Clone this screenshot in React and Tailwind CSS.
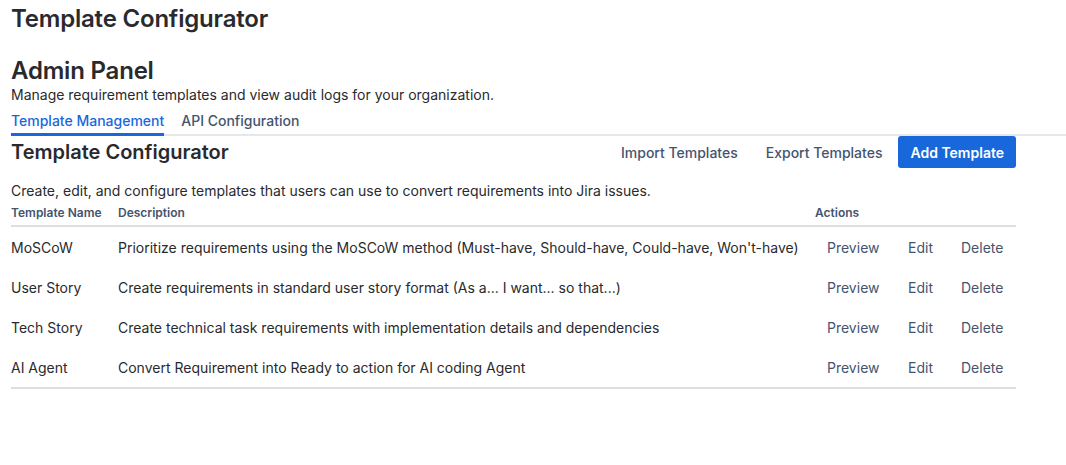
import React from "react";

const rows = [
  ["MoSCoW", "Prioritize requirements using the MoSCoW method (Must-have, Should-have, Could-have, Won't-have)"],
  ["User Story", "Create requirements in standard user story format (As a... I want... so that...)"],
  ["Tech Story", "Create technical task requirements with implementation details and dependencies"],
  ["AI Agent", "Convert Requirement into Ready to action for AI coding Agent"],
];

export default function App() {
  return (
    <div
      className="min-h-[465px] bg-white pl-[11px] text-[#292A2E]"
      style={{ fontFamily: "Inter, 'Noto Sans', sans-serif" }}
    >
      <h1 className="pt-[5px] text-[24px] font-semibold leading-[28px] tracking-[-0.2px]">Template Configurator</h1>
      <h2 className="mt-[24px] text-[24px] font-semibold leading-[28px] tracking-[-0.2px]">Admin Panel</h2>
      <p className="text-[14px] leading-[20px]">Manage requirement templates and view audit logs for your organization.</p>

      <div className="mt-[6px] flex border-b-2 border-[#E6E7EA]">
        <div className="-mb-[2px] flex gap-[17px]">
          <div className="border-b-[3px] border-[#1868DB] pb-[2px] text-[14px] font-medium leading-[20px] text-[#1868DB]">
            Template Management
          </div>
          <div className="pb-[2px] text-[14px] font-medium leading-[20px] text-[#44546F]">API Configuration</div>
        </div>
      </div>

      <div className="w-[1005px]">
        <div className="flex items-center justify-between">
          <h3 className="text-[20px] font-semibold leading-[24px]">Template Configurator</h3>
          <div className="flex gap-[4px]">
            <button className="h-[32px] rounded-[3px] px-[12px] text-[14px] font-medium text-[#44546F]">Import Templates</button>
            <button className="h-[32px] rounded-[3px] px-[12px] text-[14px] font-medium text-[#44546F]">Export Templates</button>
            <button className="h-[32px] rounded-[3px] bg-[#1868DB] px-[12px] text-[14px] font-semibold text-white">Add Template</button>
          </div>
        </div>

        <p className="mt-[13px] text-[14px] leading-[20px]">
          Create, edit, and configure templates that users can use to convert requirements into Jira issues.
        </p>

        <div className="grid grid-cols-[107px_1fr_201px] border-b-2 border-[#DCDFE4] pb-[4px] pt-[4px] text-[12px] font-semibold leading-[16px] text-[#44546F]">
          <div>Template Name</div>
          <div>Description</div>
          <div>Actions</div>
        </div>
        <div className="border-b-2 border-[#DCDFE4]">
          {rows.map(([name, desc]) => (
            <div key={name} className="grid h-[40px] grid-cols-[107px_1fr_201px] items-center pt-[2px] text-[14px] leading-[20px]">
              <div>{name}</div>
              <div>{desc}</div>
              <div className="flex text-[#44546F]">
                <span className="w-[93px] pl-[12px]">Preview</span>
                <span className="w-[53px]">Edit</span>
                <span>Delete</span>
              </div>
            </div>
          ))}
        </div>
      </div>
    </div>
  );
}
